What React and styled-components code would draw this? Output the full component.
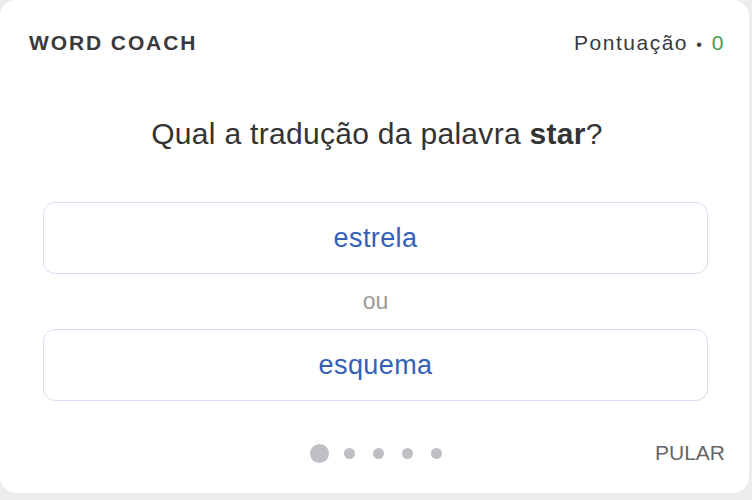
import React from "react";
import styled, { createGlobalStyle } from "styled-components";

const GlobalStyle = createGlobalStyle`
  html, body {
    margin: 0;
    padding: 0;
    background: #ececee;
    font-family: "Liberation Sans", Arial, sans-serif;
  }
`;

const options = ["estrela", "esquema"];

const App = () => {
  return (
    <>
      <GlobalStyle />
      <Card>
        <Header>
          <Title>WORD COACH</Title>
          <Score>
            Pontuação <Dot>•</Dot> <Points>0</Points>
          </Score>
        </Header>
        <Question>
          Qual a tradução da palavra <strong>star</strong>?
        </Question>
        <Options>
          <Option>{options[0]}</Option>
          <Or>ou</Or>
          <Option>{options[1]}</Option>
        </Options>
        <Footer>
          <Progress>
            {[0, 1, 2, 3, 4].map((i) => (
              <Step key={i} $active={i === 0} />
            ))}
          </Progress>
          <Skip>PULAR</Skip>
        </Footer>
      </Card>
    </>
  );
};

const Card = styled.div`
  width: 749px;
  height: 493px;
  box-sizing: border-box;
  background: #fff;
  border-radius: 16px;
  box-shadow: 0 0 0 1px #ececee;
  display: flex;
  flex-direction: column;
  padding: 0 24px 0 29px;
  color: #333;
`;

const Header = styled.div`
  display: flex;
  justify-content: space-between;
  align-items: center;
  height: 86px;
`;

const Title = styled.h1`
  margin: 0;
  font-size: 21px;
  font-weight: 700;
  letter-spacing: 1.9px;
  color: #3a3a3c;
`;

const Score = styled.div`
  font-size: 21px;
  letter-spacing: 1.5px;
  color: #3a3a3c;
`;

const Dot = styled.span`
  font-size: 16px;
  margin: 0 1px;
`;

const Points = styled.span`
  color: #4c9a52;
`;

const Question = styled.p`
  margin: 31px 0 0;
  text-align: center;
  font-size: 30px;
  line-height: 34px;
  letter-spacing: 0.3px;
  color: #333;
  strong {
    font-weight: 700;
  }
`;

const Options = styled.div`
  display: flex;
  flex-direction: column;
  margin: 51px 17px 0 14px;
`;

const Option = styled.button`
  height: 72px;
  border: 1.5px solid #d6def2;
  border-radius: 12px;
  background: #fff;
  font-family: inherit;
  font-size: 27px;
  letter-spacing: 0.4px;
  color: #3460b8;
  cursor: pointer;
`;

const Or = styled.div`
  height: 55px;
  display: flex;
  align-items: center;
  justify-content: center;
  font-size: 23px;
  color: #9a9a9a;
`;

const Footer = styled.div`
  display: grid;
  grid-template-columns: 1fr auto 1fr;
  align-items: center;
  margin-top: 31px;
  height: 42px;
`;

const Progress = styled.div`
  grid-column: 2;
  display: flex;
  align-items: center;
  gap: 18px;
  margin-left: -3px;
`;

const Step = styled.span`
  width: ${(p) => (p.$active ? 19 : 11)}px;
  height: ${(p) => (p.$active ? 19 : 11)}px;
  margin-right: ${(p) => (p.$active ? -3 : 0)}px;
  border-radius: 50%;
  background: #bfbfc4;
`;

const Skip = styled.button`
  grid-column: 3;
  justify-self: end;
  border: none;
  background: none;
  padding: 0;
  font-family: inherit;
  font-size: 21px;
  color: #666;
  cursor: pointer;
`;

export default App;
